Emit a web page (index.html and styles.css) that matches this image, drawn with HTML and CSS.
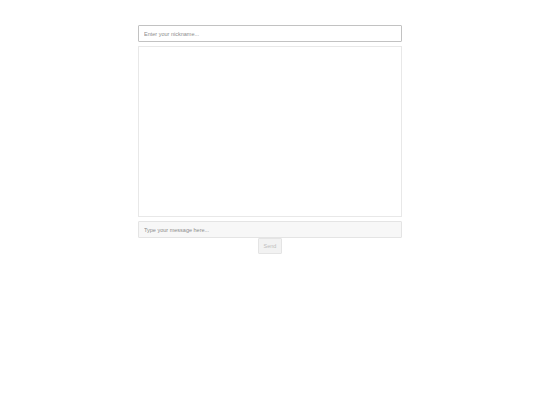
FILE: index.html
```html
<!DOCTYPE html>
<html>
<head>
<meta charset="utf-8">
<link rel="stylesheet" href="styles.css">
</head>
<body>
<div class="chat">
  <input class="nick" type="text" placeholder="Enter your nickname...">
  <div class="messages"></div>
  <input class="msg" type="text" placeholder="Type your message here...">
  <button class="send">Send</button>
</div>
</body>
</html>
```
FILE: styles.css
```css
html, body { margin: 0; padding: 0; background: #fff; }
body { font-family: "Liberation Sans", Arial, sans-serif; }
.chat {
  width: 264px;
  margin: 25px auto 0;
  display: flex;
  flex-direction: column;
  align-items: center;
}
.nick, .msg {
  box-sizing: border-box;
  width: 264px;
  height: 17px;
  padding: 0 5px;
  font-family: "Liberation Sans", Arial, sans-serif;
  font-size: 5.5px;
  outline: none;
}
.nick { border: 1px solid #c2c2c2; border-radius: 1px; background: #fff; }
.nick::placeholder, .msg::placeholder { color: #8c8c8c; }
.messages {
  box-sizing: border-box;
  width: 264px;
  height: 171px;
  margin-top: 4px;
  border: 1px solid #e8e8e8;
  background: #fff;
}
.msg {
  margin-top: 4px;
  border: 1px solid #e4e4e4;
  background: #f7f7f7;
  border-radius: 1px;
}
.send {
  box-sizing: border-box;
  width: 24px;
  height: 16px;
  padding: 0;
  border: 1px solid #e4e4e4;
  background: #f2f2f2;
  color: #bdbdbd;
  font-family: "Liberation Sans", Arial, sans-serif;
  font-size: 5.5px;
  border-radius: 1px;
}
```
